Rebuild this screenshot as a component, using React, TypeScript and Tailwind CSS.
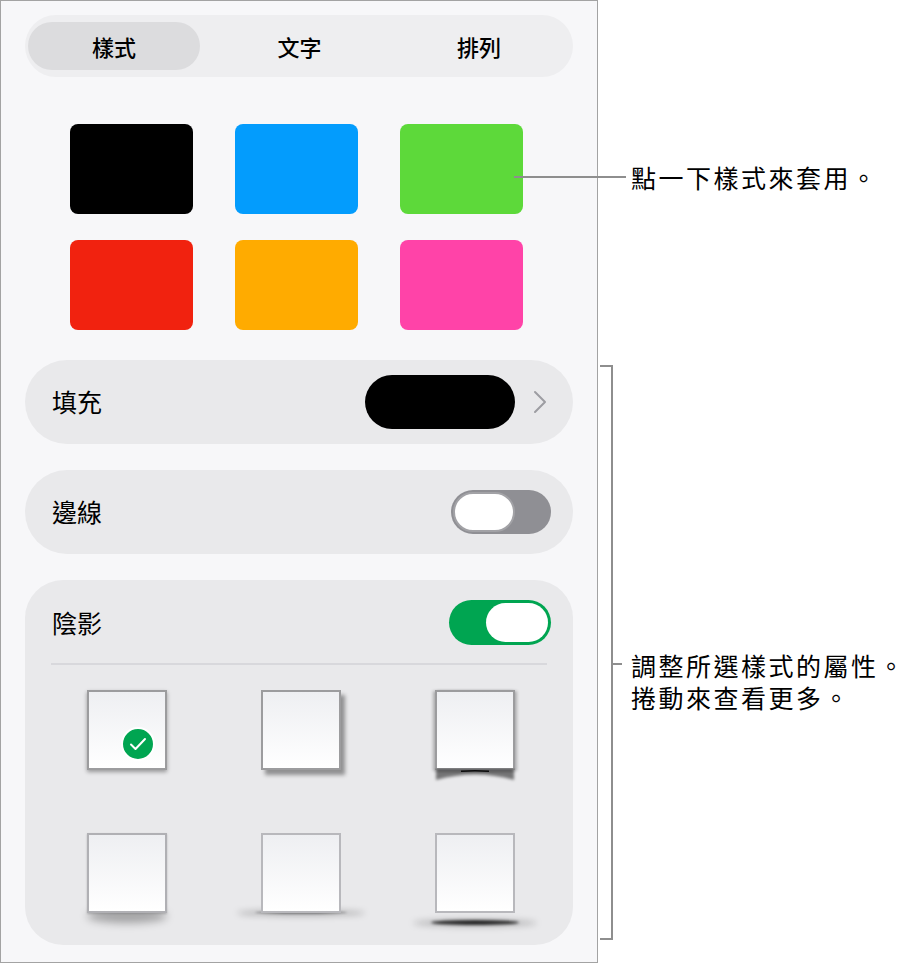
import React from "react";

const font = { fontFamily: '"Noto Sans CJK TC", "Noto Sans", sans-serif' };

function Toggle({ on }: { on: boolean }) {
  return on ? (
    <div className="w-[102px] h-[45px] rounded-full bg-[#00a551] flex items-center justify-end p-[3px]">
      <div className="w-[62px] h-[39px] rounded-full bg-white" />
    </div>
  ) : (
    <div className="w-[100px] h-[44px] rounded-full bg-[#8f8f94] flex items-center justify-start p-[2px]">
      <div className="w-[62px] h-[40px] rounded-full bg-white border-2 border-[#a2a2a6]" />
    </div>
  );
}

function Thumb({ kind }: { kind: number }) {
  const base =
    "relative w-[80px] h-[80px] bg-gradient-to-b from-[#eeeff2] to-white";
  if (kind === 1)
    return (
      <div className={`${base} border-2 border-[#9c9c9e] shadow-[0_2px_4px_rgba(0,0,0,0.35)]`}>
        <div className="absolute right-[10px] bottom-[7px] w-[34px] h-[34px] rounded-full bg-[#00a551] border-2 border-white flex items-center justify-center">
          <svg width="18" height="14" viewBox="0 0 18 14" fill="none">
            <path d="M2 7.5 L6.5 12 L16 2" stroke="white" strokeWidth="2" strokeLinecap="round" strokeLinejoin="round" />
          </svg>
        </div>
      </div>
    );
  if (kind === 2)
    return <div className={`${base} border-2 border-[#9c9c9e] shadow-[4px_5px_4px_rgba(0,0,0,0.38)]`} />;
  if (kind === 3)
    return (
      <div className="relative w-[80px] h-[80px]">
        <div className={`${base} h-full border-2 border-[#9c9c9e] shadow-[-2px_1px_3px_rgba(0,0,0,0.25),2px_1px_3px_rgba(0,0,0,0.25)]`} />
        <svg className="absolute left-[-4px] top-[78px]" width="88" height="18" viewBox="0 0 88 18">
          <defs>
            <filter id="curlblur" x="-20%" y="-50%" width="140%" height="200%">
              <feGaussianBlur stdDeviation="1.6" />
            </filter>
            <filter id="lineblur" x="-20%" y="-100%" width="140%" height="300%">
              <feGaussianBlur stdDeviation="0.6" />
            </filter>
          </defs>
          <path d="M5 1 L83 1 L83 12 Q44 1 5 12 Z" fill="rgba(0,0,0,0.5)" filter="url(#curlblur)" />
          <path d="M30 3.2 Q44 2.4 58 3.2" stroke="rgba(0,0,0,0.9)" strokeWidth="1.6" fill="none" filter="url(#lineblur)" />
        </svg>
      </div>
    );
  if (kind === 4)
    return (
      <div className="relative w-[80px] h-[80px]">
        <div className="absolute left-[0px] right-[0px] bottom-[-10px] h-[14px] rounded-[50%] bg-black/30 blur-[4px]" />
        <div className={`${base} h-full border-2 border-[#b0b0b4] shadow-[0_1px_2px_rgba(0,0,0,0.2)]`} />
      </div>
    );
  if (kind === 5)
    return (
      <div className="relative w-[80px] h-[80px]">
        <div className="absolute left-[-24px] right-[-24px] bottom-[-3px] h-[6px] rounded-[50%] bg-black/25 blur-[3px]" />
        <div className="absolute left-[-6px] right-[-6px] bottom-[-1px] h-[3px] rounded-[50%] bg-black/40 blur-[1px]" />
        <div className={`${base} h-full border-2 border-[#b8b8bc]`} />
      </div>
    );
  return (
    <div className="relative w-[80px] h-[80px]">
      <div className="absolute left-[-22px] right-[-22px] bottom-[-14px] h-[8px] rounded-[50%] bg-black/20 blur-[3px]" />
      <div className="absolute left-[-4px] right-[-4px] bottom-[-12px] h-[5px] rounded-[50%] bg-black/80 blur-[1.5px]" />
      <div className={`${base} h-full border-2 border-[#b8b8bc]`} />
    </div>
  );
}

export default function App() {
  const swatches = ["#000000", "#039cfd", "#5dd93a", "#f1220f", "#ffab00", "#ff43a8"];
  return (
    <div className="relative w-[920px] h-[963px] bg-white flex text-black" style={font}>
      {/* Panel */}
      <div className="w-[598px] h-[963px] border border-[#a3a3a3] bg-[#f7f7f9] flex flex-col px-[24px] pt-[14px]">
        {/* Tabs */}
        <div className="h-[62px] rounded-full bg-[#eeeef0] py-[7px] pl-[4px] pr-[4px] flex">
          <div className="w-[172px] ml-[-1px] rounded-full bg-[#dcdcde] flex items-center justify-center text-[22px] font-medium">
            樣式
          </div>
          <div className="flex-1 flex items-center justify-center text-[22px] font-medium pl-[10px]">文字</div>
          <div className="w-[180px] flex items-center justify-center text-[22px] font-medium">排列</div>
        </div>

        {/* Swatches */}
        <div className="mt-[47px] ml-[45px] grid grid-cols-[123px_123px_123px] gap-x-[42px] gap-y-[26px]">
          {swatches.map((c) => (
            <div key={c} className="h-[90px] rounded-[8px]" style={{ backgroundColor: c }} />
          ))}
        </div>

        {/* Fill */}
        <div className="mt-[30px] h-[84px] rounded-full bg-[#e9e9eb] flex items-center pl-[27px] pr-[26px]">
          <span className="text-[25px] flex-1">填充</span>
          <div className="w-[150px] h-[54px] rounded-full bg-black" />
          <svg className="ml-[18px]" width="14" height="24" viewBox="0 0 14 24" fill="none">
            <path d="M2 2 L12 12 L2 22" stroke="#9d9da2" strokeWidth="2" strokeLinecap="round" strokeLinejoin="round" />
          </svg>
        </div>

        {/* Border */}
        <div className="mt-[26px] h-[84px] rounded-full bg-[#e9e9eb] flex items-center pl-[27px] pr-[22px]">
          <span className="text-[25px] flex-1">邊線</span>
          <Toggle on={false} />
        </div>

        {/* Shadow */}
        <div className="mt-[26px] h-[365px] rounded-[38px] bg-[#e9e9eb] flex flex-col pt-[20px]">
          <div className="flex items-center pl-[27px] pr-[22px]">
            <span className="text-[25px] flex-1">陰影</span>
            <Toggle on={true} />
          </div>
          <div className="mt-[18px] mx-[26px] h-[2px] bg-[#d8d8dc]" />
          <div className="mt-[25px] pl-[62px] grid grid-cols-[80px_80px_80px] gap-x-[94px] gap-y-[63px]">
            {[1, 2, 3, 4, 5, 6].map((k) => (
              <Thumb key={k} kind={k} />
            ))}
          </div>
        </div>
      </div>

      {/* Callouts */}
      <div className="flex-1 flex flex-col pl-[33px] text-[25px] leading-[32px] tracking-[2.5px] text-black">
        <div className="mt-[161px] h-[32px]">點一下樣式來套用。</div>
        <div className="mt-[456px] h-[32px]">調整所選樣式的屬性。</div>
        <div className="h-[32px]">捲動來查看更多。</div>
      </div>

      {/* Leader lines (overlay) */}
      <div className="absolute left-[514px] top-[176px] w-[112px] h-[2px] bg-[#8e8e8e]" />
      <div className="absolute left-[600px] top-[365px] w-[13px] h-[575px] border-t-2 border-b-2 border-r-2 border-[#8e8e8e]" />
      <div className="absolute left-[612px] top-[663px] w-[10px] h-[2px] bg-[#8e8e8e]" />
    </div>
  );
}
